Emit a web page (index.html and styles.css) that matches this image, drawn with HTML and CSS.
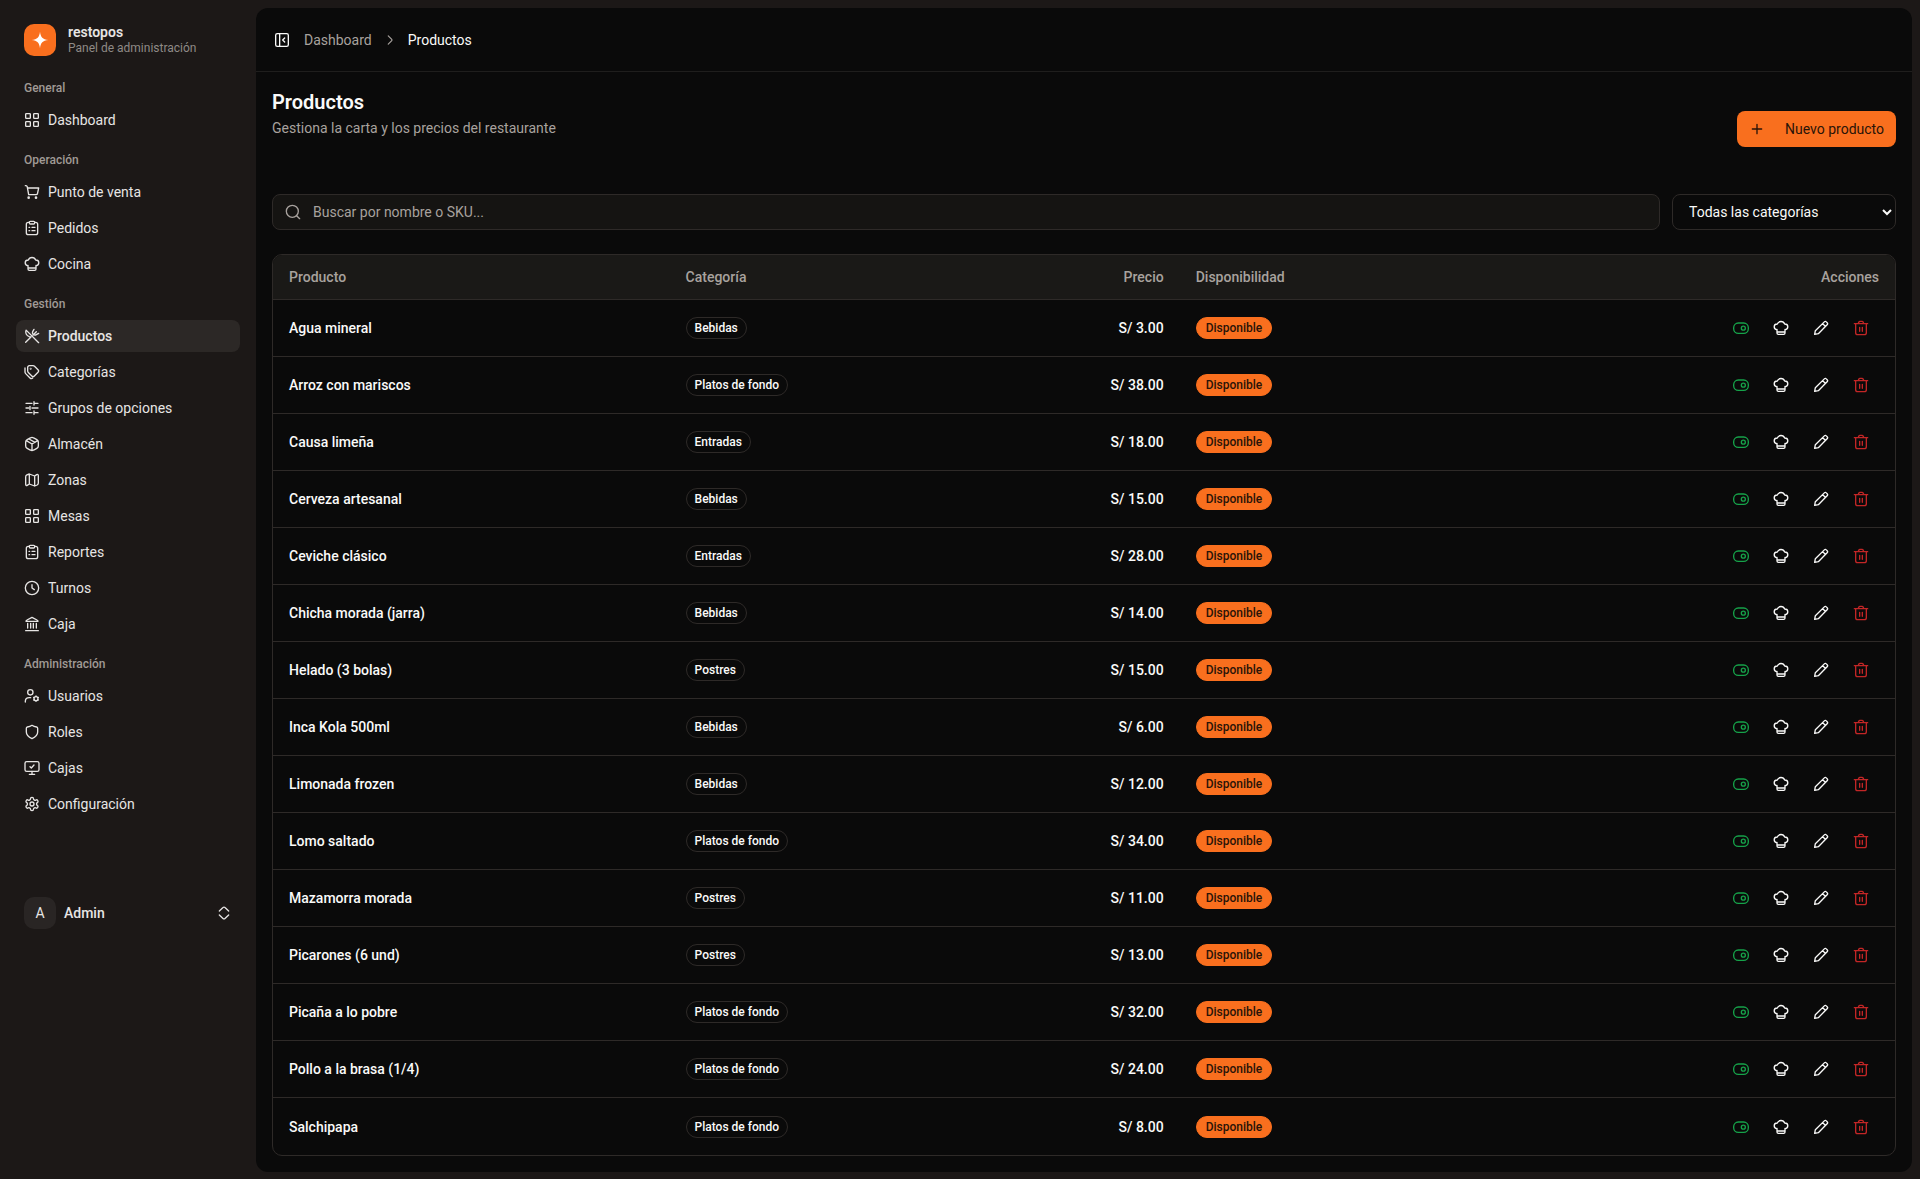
FILE: index.html
```html
<!DOCTYPE html>
<html lang="es">
<head>
    <meta charset="UTF-8">
    <meta name="viewport" content="width=device-width, initial-scale=1.0">
    <title>Productos - restopos</title>
    <link rel="stylesheet" href="styles.css">
</head>
<body>
    <!-- ICONS -->
    <svg class="sprite" aria-hidden="true">
        <symbol id="i-grid" viewBox="0 0 24 24"><rect x="2.5" y="2.5" width="7" height="7" rx="1"/><rect x="14.500" y="2.5" width="7" height="7" rx="1"/><rect x="2.5" y="14.5" width="7" height="7" rx="1"/><rect x="14.5" y="14.5" width="7" height="7" rx="1"/></symbol>
        <symbol id="i-cart" viewBox="0 0 24 24"><path d="M2 2.500h1c1 0 1.600.6 1.800 1.500L7 16h11c1.200 0 2-.6 2.300-1.800L22 6H5.300"/><circle cx="7" cy="20.500" r="1"/><circle cx="18" cy="20.500" r="1"/></symbol>
        <symbol id="i-clipboard" viewBox="0 0 24 24"><path d="M8 3.500H6.500a3 3 0 0 0-3 3V19a3 3 0 0 0 3 3h11a3 3 0 0 0 3-3V6.500a3 3 0 0 0-3-3H16"/><rect x="8" y="2" width="8" height="4" rx="1.500"/><path d="M7.500 11h1M7.500 16h1M12 11h4.500M12 16h4.500"/></symbol>
        <symbol id="i-chef" viewBox="0 0 24 24"><path d="M6 14.800C3.500 14.300 1.800 12.600 1.800 10.200 1.800 7.800 3.800 6 6.500 6c.8-2.300 2.900-3.800 5.500-3.800s4.700 1.500 5.500 3.800c2.700 0 4.700 1.800 4.700 4.200 0 2.400-1.700 4.100-4.200 4.600M6 14v5.500c0 1.300.7 2 2 2h8c1.300 0 2-.7 2-2V14M6 18h12"/></symbol>
        <symbol id="i-food" viewBox="0 0 24 24"><path d="M22 22 3.200 3.200C1.500 7 3.500 11.500 8 13l2 .5M2.500 21.500l8-8M13.500 10.500l2-2M15 2l-2 3.500c-.8 1.500-.3 2.800.6 3.800 1.200 1.200 3.200 1.800 4.900.7L22 8M18.500 5.500l-3 3"/></symbol>
        <symbol id="i-tags" viewBox="0 0 24 24"><path d="M8 2.500h5.500c1 0 1.600.3 2.300 1l5.200 5.200c1.300 1.300 1.300 2.500 0 3.800l-5.500 5.500c-1.300 1.300-2.500 1.300-3.800 0L6.500 12.800c-.7-.7-1-1.300-1-2.300V5A2.500 2.500 0 0 1 8 2.500z"/><circle cx="10" cy="7" r=".5"/><path d="M1.500 6v6c0 1 .3 1.700 1 2.400l6.500 6.500c1.300 1.300 2.700 1.400 4 .2"/></symbol>
        <symbol id="i-sliders" viewBox="0 0 24 24"><path d="M3 5h9M16 5h5M15 2.500v5M3 12h4M12 12h9M9 9.500v5M3 19h9M16 19h5M15 16.500v5"/></symbol>
        <symbol id="i-box" viewBox="0 0 24 24"><path d="M12 22c-1 0-1.700-.4-3.200-1.200l-4-2.200C3.200 17.700 2.500 17 2.500 15V9c0-2 .7-2.700 2.300-3.600l4-2.200C10.300 2.400 11 2 12 2s1.700.4 3.200 1.200l4 2.200c1.600.9 2.300 1.600 2.300 3.600v6c0 2-.7 2.700-2.300 3.600l-4 2.200C13.700 21.600 13 22 12 22zM12 12v10M12 12 3.500 7M12 12l8.500-5M7.500 4.500l9 5"/></symbol>
        <symbol id="i-map" viewBox="0 0 24 24"><path d="M2.500 7.500c0-2 .3-2.500 1.800-3.200L8 3l8 3 3-2c1.500-.7 2.500-.2 2.500 1.500v11c0 1.500-.5 2.300-1.800 3L16 21l-8-3-3.200 2c-1.300.6-2.300 0-2.300-1.500zM8 3v15M16 6v15"/></symbol>
        <symbol id="i-clock" viewBox="0 0 24 24"><circle cx="12" cy="12" r="10"/><path d="M12 7v5l3.500 2.500"/></symbol>
        <symbol id="i-bank" viewBox="0 0 24 24"><path d="M3 8c0-1 .4-1.500 1.500-2L12 2l7.500 4c1.100.5 1.500 1 1.500 2zM5.500 11v7M10 11v7M14 11v7M18.500 11v7M2.500 22h19"/></symbol>
        <symbol id="i-user" viewBox="0 0 24 24"><circle cx="9.500" cy="6.500" r="4"/><path d="M2 21v-1c0-3.500 2.500-5.500 6-5.500h2"/><circle cx="18" cy="16" r="3"/><path d="M18 12v1M18 19v1M21.500 14l-.9.500M15.400 17.500l-.9.500M21.500 18l-.9-.5M15.400 14.500l-.9-.5"/></symbol>
        <symbol id="i-shield" viewBox="0 0 24 24"><path d="M12 2c2.500 1.800 5 2.300 7 2.500 1.200.2 1.500.7 1.500 2V12c0 5-4 8-8.500 10-4.500-2-8.500-5-8.500-10V6.500c0-1.300.3-1.800 1.500-2 2-.2 4.500-.7 7-2.500z"/></symbol>
        <symbol id="i-monitor" viewBox="0 0 24 24"><rect x="1.500" y="2.500" width="21" height="14.500" rx="2.500"/><path d="M9 10l2 2 4-4.500M12 17v4M8 21.500h8"/></symbol>
        <symbol id="i-gear" viewBox="0 0 24 24"><path d="M12.220 2h-.44a2 2 0 0 0-2 2v.18a2 2 0 0 1-1 1.730l-.43.25a2 2 0 0 1-2 0l-.15-.08a2 2 0 0 0-2.730.73l-.22.38a2 2 0 0 0 .73 2.730l.15.1a2 2 0 0 1 1 1.720v.51a2 2 0 0 1-1 1.740l-.15.09a2 2 0 0 0-.73 2.730l.22.38a2 2 0 0 0 2.730.73l.15-.08a2 2 0 0 1 2 0l.43.25a2 2 0 0 1 1 1.730V20a2 2 0 0 0 2 2h.44a2 2 0 0 0 2-2v-.18a2 2 0 0 1 1-1.730l.43-.25a2 2 0 0 1 2 0l.15.08a2 2 0 0 0 2.730-.73l.22-.39a2 2 0 0 0-.73-2.730l-.15-.08a2 2 0 0 1-1-1.740v-.5a2 2 0 0 1 1-1.740l.15-.09a2 2 0 0 0 .73-2.730l-.22-.38a2 2 0 0 0-2.730-.73l-.15.08a2 2 0 0 1-2 0l-.43-.25a2 2 0 0 1-1-1.730V4a2 2 0 0 0-2-2z"/><circle cx="12" cy="12" r="3"/></symbol>
        <symbol id="i-updown" viewBox="0 0 24 24"><path d="M5 9l5.500-5.200c.9-.9 2.100-.9 3 0L19 9M5 15l5.500 5.200c.9.9 2.100.9 3 0L19 15"/></symbol>
        <symbol id="i-panel" viewBox="0 0 24 24"><rect x="2.500" y="2.500" width="19" height="19" rx="2.500"/><path d="M8.500 2.500v19M16 9l-3 3 3 3"/></symbol>
        <symbol id="i-right" viewBox="0 0 24 24"><path d="M9 5l6 6c.7.7.7 1.300 0 2l-6 6"/></symbol>
        <symbol id="i-plus" viewBox="0 0 24 24"><path d="M12 5v14M5 12h14"/></symbol>
        <symbol id="i-search" viewBox="0 0 24 24"><circle cx="11" cy="11" r="9"/><path d="M17.500 17.500 22 22"/></symbol>
        <symbol id="i-toggle" viewBox="0 0 24 24"><rect x="1" y="4.500" width="22" height="15.500" rx="7"/><circle cx="15.500" cy="12.200" r="3"/></symbol>
        <symbol id="i-pencil" viewBox="0 0 24 24"><path d="M2.500 21.500l1-5.500L17 2.800c1-1 2.300-.8 3 0l1.200 1.200c.8.8 1 2 0 3L8 20.500zM14.500 5.500l4 4"/></symbol>
        <symbol id="i-trash" viewBox="0 0 24 24"><path d="M4 6v13a3 3 0 0 0 3 3h10a3 3 0 0 0 3-3V6M2 5.500h20M8 5l1-2.200c.3-.6.7-.8 1.300-.8h3.400c.6 0 1 .2 1.300.8L16 5M10 11v6M14 11v6"/></symbol>
    </svg>

    <!-- SIDEBAR -->
    <aside class="sidebar">
        <div class="brand">
            <div class="brand-logo">
                <svg class="star" viewBox="0 0 24 24"><path d="M12 1c1 7.500 3.500 10 11 11-7.500 1-10 3.500-11 11-1-7.500-3.500-10-11-11 7.500-1 10-3.500 11-11z"/></svg>
            </div>
            <div class="brand-text">
                <strong>restopos</strong>
                <span>Panel de administración</span>
            </div>
        </div>
        <nav class="nav">
            <div class="nav-group">
                <div class="nav-label">General</div>
                <a href="#" class="nav-item"><svg class="icon"><use href="#i-grid"/></svg>Dashboard</a>
            </div>
            <div class="nav-group">
                <div class="nav-label">Operación</div>
                <a href="#" class="nav-item"><svg class="icon"><use href="#i-cart"/></svg>Punto de venta</a>
                <a href="#" class="nav-item"><svg class="icon"><use href="#i-clipboard"/></svg>Pedidos</a>
                <a href="#" class="nav-item"><svg class="icon"><use href="#i-chef"/></svg>Cocina</a>
            </div>
            <div class="nav-group">
                <div class="nav-label">Gestión</div>
                <a href="#" class="nav-item active"><svg class="icon"><use href="#i-food"/></svg>Productos</a>
                <a href="#" class="nav-item"><svg class="icon"><use href="#i-tags"/></svg>Categorías</a>
                <a href="#" class="nav-item"><svg class="icon"><use href="#i-sliders"/></svg>Grupos de opciones</a>
                <a href="#" class="nav-item"><svg class="icon"><use href="#i-box"/></svg>Almacén</a>
                <a href="#" class="nav-item"><svg class="icon"><use href="#i-map"/></svg>Zonas</a>
                <a href="#" class="nav-item"><svg class="icon"><use href="#i-grid"/></svg>Mesas</a>
                <a href="#" class="nav-item"><svg class="icon"><use href="#i-clipboard"/></svg>Reportes</a>
                <a href="#" class="nav-item"><svg class="icon"><use href="#i-clock"/></svg>Turnos</a>
                <a href="#" class="nav-item"><svg class="icon"><use href="#i-bank"/></svg>Caja</a>
            </div>
            <div class="nav-group">
                <div class="nav-label">Administración</div>
                <a href="#" class="nav-item"><svg class="icon"><use href="#i-user"/></svg>Usuarios</a>
                <a href="#" class="nav-item"><svg class="icon"><use href="#i-shield"/></svg>Roles</a>
                <a href="#" class="nav-item"><svg class="icon"><use href="#i-monitor"/></svg>Cajas</a>
                <a href="#" class="nav-item"><svg class="icon"><use href="#i-gear"/></svg>Configuración</a>
            </div>
        </nav>
        <button type="button" class="user-button">
            <span class="avatar">A</span>
            <span class="user-name">Admin</span>
            <svg class="icon"><use href="#i-updown"/></svg>
        </button>
    </aside>

    <!-- CONTENT -->
    <main class="main">
        <header class="topbar">
            <button type="button" class="panel-button" aria-label="Alternar menú"><svg class="icon"><use href="#i-panel"/></svg></button>
            <nav class="breadcrumb">
                <a href="#">Dashboard</a>
                <svg class="icon icon-small"><use href="#i-right"/></svg>
                <span>Productos</span>
            </nav>
        </header>
        <div class="content">
            <div class="page-head">
                <div>
                    <h1>Productos</h1>
                    <p>Gestiona la carta y los precios del restaurante</p>
                </div>
                <button type="button" class="new-button"><svg class="icon"><use href="#i-plus"/></svg>Nuevo producto</button>
            </div>
            <div class="filters">
                <label class="search">
                    <svg class="icon"><use href="#i-search"/></svg>
                    <input type="text" placeholder="Buscar por nombre o SKU..." aria-label="Buscar">
                </label>
                <select class="category-select" aria-label="Categoría">
                    <option>Todas las categorías</option>
                    <option>Bebidas</option>
                    <option>Entradas</option>
                    <option>Platos de fondo</option>
                    <option>Postres</option>
                </select>
            </div>
            <div class="table-box">
                <table>
                    <colgroup>
                        <col class="col-product">
                        <col class="col-category">
                        <col class="col-price">
                        <col class="col-status">
                        <col>
                    </colgroup>
                    <thead>
                        <tr>
                            <th>Producto</th>
                            <th>Categoría</th>
                            <th class="right">Precio</th>
                            <th>Disponibilidad</th>
                            <th class="right">Acciones</th>
                        </tr>
                    </thead>
                    <tbody id="productRows"></tbody>
                </table>
            </div>
        </div>
    </main>

    <script src="script.js"></script>
</body>
</html>
```

FILE: styles.css
```css
* {
    box-sizing: border-box;
}
body {
    margin: 0;
    min-height: 100vh;
    display: flex;
    background-color: #1c1817;
    color: #fafaf9;
    color-scheme: dark;
    font-family: Roboto, "Liberation Sans", sans-serif;
    font-size: 14px;
    line-height: 20px;
}
button, input, select {
    font: inherit;
    color: inherit;
}
button {
    border: none;
    background: none;
    padding: 0;
    cursor: pointer;
}
a {
    color: inherit;
    text-decoration: none;
}
.sprite {
    position: absolute;
    width: 0;
    height: 0;
}
.icon {
    width: 16px;
    height: 16px;
    flex-shrink: 0;
    fill: none;
    stroke: currentColor;
    stroke-width: 2;
    stroke-linecap: round;
    stroke-linejoin: round;
}
.icon-small {
    width: 14px;
    height: 14px;
}

/* sidebar */
.sidebar {
    width: 256px;
    flex-shrink: 0;
    padding: 16px;
    color: #e7e5e4;
}
.brand {
    display: flex;
    align-items: center;
    gap: 12px;
    padding: 8px;
    height: 48px;
}
.brand-logo {
    width: 32px;
    height: 32px;
    border-radius: 10px;
    background-color: #f96f1e;
    display: flex;
    align-items: center;
    justify-content: center;
}
.star {
    width: 18px;
    height: 18px;
    fill: #fff;
}
.brand-text {
    display: flex;
    flex-direction: column;
    line-height: 16px;
}
.brand-text strong {
    font-weight: 600;
}
.brand-text span {
    font-size: 12px;
    color: #8f8a86;
}
.nav {
    display: flex;
    flex-direction: column;
    gap: 8px;
    padding-top: 8px;
}
.nav-group {
    display: flex;
    flex-direction: column;
    gap: 4px;
}
.nav-label {
    height: 32px;
    margin-bottom: -4px;
    padding: 0 8px;
    font-size: 12px;
    font-weight: 500;
    line-height: 32px;
    color: #a09a95;
}
.nav-item {
    display: flex;
    align-items: center;
    gap: 8px;
    height: 32px;
    padding: 0 8px;
    border-radius: 8px;
}
.nav-item.active {
    background-color: #2c2826;
    font-weight: 500;
}
.user-button {
    display: flex;
    align-items: center;
    gap: 8px;
    width: 100%;
    height: 48px;
    margin-top: 69px;
    padding: 8px;
    text-align: left;
}
.avatar {
    width: 32px;
    height: 32px;
    border-radius: 10px;
    background-color: #292524;
    line-height: 32px;
    text-align: center;
}
.user-name {
    flex: 1;
    font-weight: 500;
}

/* main panel */
.main {
    flex: 1;
    min-width: 0;
    margin: 8px 8px 8px 0;
    border-radius: 12px;
    background-color: #0a0a0a;
}
.topbar {
    display: flex;
    align-items: center;
    gap: 8px;
    height: 64px;
    padding: 0 12px;
    border-bottom: 1px solid #1f1e1d;
}
.panel-button {
    display: flex;
    align-items: center;
    justify-content: center;
    width: 28px;
    height: 28px;
}
.breadcrumb {
    display: flex;
    align-items: center;
    gap: 11px;
    color: #a8a29e;
}
.breadcrumb span {
    color: #fafaf9;
}
.content {
    display: flex;
    flex-direction: column;
    gap: 24px;
    padding: 16px;
}
.page-head {
    display: flex;
    align-items: center;
    justify-content: space-between;
}
.page-head h1 {
    margin: 0 0 2px;
    font-size: 20px;
    font-weight: 600;
    line-height: 28px;
}
.page-head p {
    margin: 0 0 32px;
    color: #a8a29e;
}
.new-button {
    display: flex;
    align-items: center;
    gap: 20px;
    height: 36px;
    padding: 0 12px;
    border-radius: 8px;
    background-color: #f96f1e;
    color: #2a1408;
}
.filters {
    display: flex;
    gap: 12px;
}
.search {
    flex: 1;
    display: flex;
    align-items: center;
    gap: 12px;
    height: 36px;
    padding: 0 12px;
    border: 1px solid #2e2a28;
    border-radius: 8px;
    background-color: #151412;
    color: #a8a29e;
}
.search input {
    flex: 1;
    border: none;
    outline: none;
    padding: 0;
    background: none;
}
.search input::placeholder {
    color: #a8a29e;
}
.category-select {
    width: 224px;
    height: 36px;
    padding: 0 12px;
    border: 1px solid #2e2a28;
    border-radius: 8px;
    background-color: #0a0a0a;
}

/* products table */
.table-box {
    border: 1px solid #2e2a28;
    border-radius: 10px;
    overflow: hidden;
}
table {
    width: 100%;
    table-layout: fixed;
    border-spacing: 0;
    font-weight: 500;
}
.col-product {
    width: 24.45%;
}
.col-category {
    width: 21.45%;
}
.col-price {
    width: 10%;
}
.col-status {
    width: 16%;
}
th {
    height: 45px;
    padding: 0 16px;
    background-color: #1a1917;
    border-bottom: 1px solid #2e2a28;
    color: #a8a29e;
    font-weight: 500;
    text-align: left;
}
td {
    height: 57px;
    padding: 0 16px;
    border-bottom: 1px solid #2e2a28;
}
tbody tr:last-child td {
    border-bottom: none;
}
.right {
    text-align: right;
}
.badge {
    display: block;
    width: fit-content;
    padding: 2px 8px;
    border: 1px solid #2e2a28;
    border-radius: 11px;
    font-size: 12px;
    line-height: 16px;
}
.badge-available {
    padding: 2px 9px;
    border-color: #f96f1e;
    background-color: #f96f1e;
    color: #2a1408;
}
.actions {
    display: flex;
    justify-content: flex-end;
    gap: 4px;
}
.actions button {
    display: flex;
    align-items: center;
    justify-content: center;
    width: 36px;
    height: 36px;
}
.actions .toggle {
    color: #16a34a;
}
.actions .delete {
    color: #c22626;
}
```

FILE: script.js
```js
const products = [
    ['Agua mineral', 'Bebidas', '3.00'],
    ['Arroz con mariscos', 'Platos de fondo', '38.00'],
    ['Causa limeña', 'Entradas', '18.00'],
    ['Cerveza artesanal', 'Bebidas', '15.00'],
    ['Ceviche clásico', 'Entradas', '28.00'],
    ['Chicha morada (jarra)', 'Bebidas', '14.00'],
    ['Helado (3 bolas)', 'Postres', '15.00'],
    ['Inca Kola 500ml', 'Bebidas', '6.00'],
    ['Limonada frozen', 'Bebidas', '12.00'],
    ['Lomo saltado', 'Platos de fondo', '34.00'],
    ['Mazamorra morada', 'Postres', '11.00'],
    ['Picarones (6 und)', 'Postres', '13.00'],
    ['Picaña a lo pobre', 'Platos de fondo', '32.00'],
    ['Pollo a la brasa (1/4)', 'Platos de fondo', '24.00'],
    ['Salchipapa', 'Platos de fondo', '8.00']
];

function actionButton(name, label, icon) {
    return `<button type="button" class="${name}" aria-label="${label}"><svg class="icon"><use href="#${icon}"/></svg></button>`;
}

document.getElementById('productRows').innerHTML = products.map(([name, category, price]) => `
    <tr>
        <td>${name}</td>
        <td><span class="badge">${category}</span></td>
        <td class="right">S/ ${price}</td>
        <td><span class="badge badge-available">Disponible</span></td>
        <td>
            <div class="actions">
                ${actionButton('toggle', 'Cambiar disponibilidad', 'i-toggle')}
                ${actionButton('recipe', 'Receta', 'i-chef')}
                ${actionButton('edit', 'Editar', 'i-pencil')}
                ${actionButton('delete', 'Eliminar', 'i-trash')}
            </div>
        </td>
    </tr>`).join('');
```
